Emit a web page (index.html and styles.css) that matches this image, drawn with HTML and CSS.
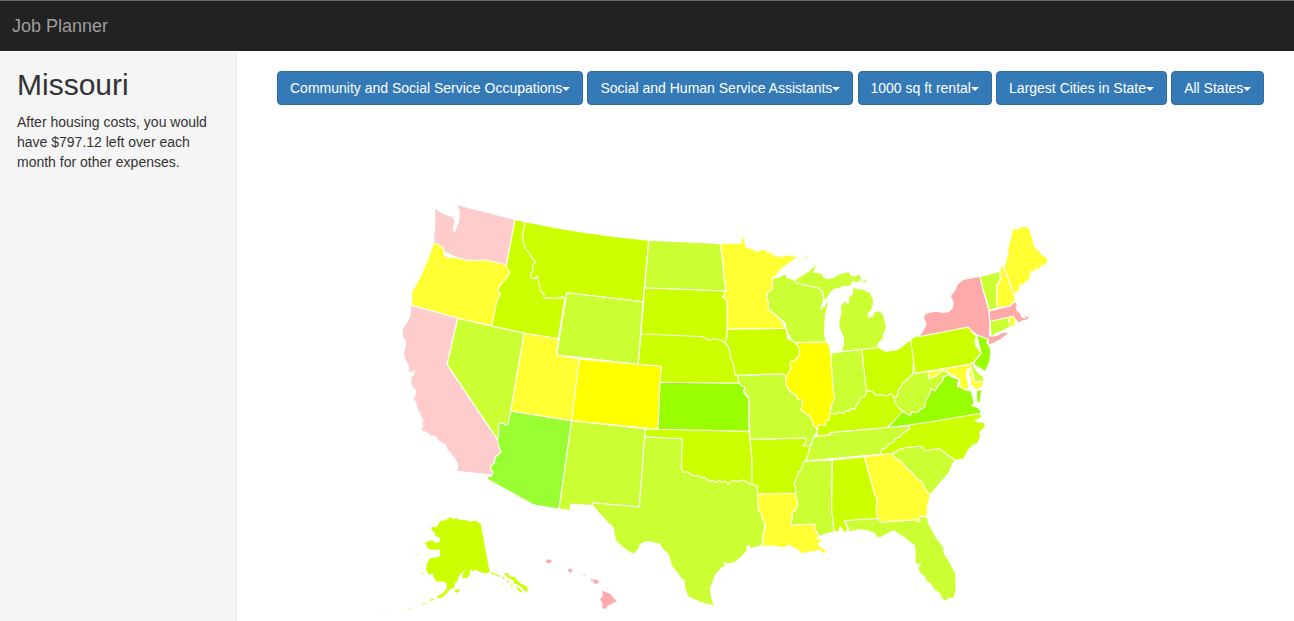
FILE: index.html
```html
<!DOCTYPE html>
<html lang="en">
<head>
<meta charset="utf-8">
<title>Job Planner</title>
<link rel="stylesheet" href="styles.css">
</head>
<body>
<header class="navbar"><a class="brand">Job Planner</a></header>
<div class="layout">
<aside class="sidebar">
<h1>Missouri</h1>
<p>After housing costs, you would have $797.12 left over each month for other expenses.</p>
</aside>
<main class="main">
<div class="filters">
<button class="btn">Community and Social Service Occupations<span class="caret"></span></button>
<button class="btn">Social and Human Service Assistants<span class="caret"></span></button>
<button class="btn">1000 sq ft rental<span class="caret"></span></button>
<button class="btn">Largest Cities in State<span class="caret"></span></button>
<button class="btn">All States<span class="caret"></span></button>
</div>
<svg class="map" viewBox="277 105 1017 516" width="1017" height="516">
<!-- West -->
<path class="rose-light" d="M434.7 207.5L438 210.3 443.3 213.3 448 215.3 453.2 216.6 455 221 454 225 453.7 231 455 231 456.5 225.5 458.5 222.5 459 216 459.2 210 457 208 457.5 204.7 515 219.5 506.3 265 480 268 440 250 433 243 434.5 240 433.5 236 434.8 225Z"/>
<path class="lime" d="M515 219.5L527 222.1 545 260 570 292 564.7 300 558.3 338.7 524.3 333.3 491.7 326 485 290 506.3 265Z"/>
<path class="yellow-light" d="M433.2 243.3L438.3 243.8 439.5 246 442.7 246.7 444.3 250 444 255 448.3 257.7 453.3 257 457 257.2 459 259 462 258.6 468 261 471 259.5 475 261 480 259.7 488 260.3 506.3 265 507 268 510 272 507 277 503.3 282.3 500 285 497.2 290 498.5 291.5 500.3 293 498.5 298 496.7 301.7 491.7 326 457.7 318.3 410.5 305 411.8 300 411.8 291.4 419.5 278 426.2 263 431.2 250Z"/>
<path class="rose-light" d="M410.5 305L457.7 318.3 447 364.3 497.3 439.3 503 452 498 477 492.3 475 457.3 471.2 457.3 463 454.5 458.3 450.5 453.3 446.8 449.5 446 445.3 442.5 443.4 437.5 440.4 435.5 436.4 430.5 435.9 426.5 432.4 421.6 431 421.2 429 422.8 426 421.5 424 422.8 420 420.5 417 420.5 415 417.8 410 415.5 403 413.2 398.3 416 393 415.8 391 413.5 388 411.5 387 410.8 383 411.1 376.2 413.5 375.5 414.2 370.3 411.8 372.7 408.8 371.8 408 365 404.1 358 403.5 353.3 405.2 346 405.2 341 402.5 337 402.1 328.1 405.5 324.2 407.8 320 410 315Z"/>
<path class="lime-light" d="M457.7 318.3L524.3 333.3 510.7 411 508 426 499 438 497.3 439.3 447 364.3Z"/>
<path class="green-light" d="M510.7 411L571.7 420.7 559 509.2 533.3 504.8 487 478.9 488.3 476.3 492 475.5 492.8 471.5 490.7 470 491.3 465 494.3 463 495.3 456.7 501.3 452.3 499.3 449 498 443 497.3 439.3 498.5 436 498.7 423.3 503 422.8 505 425 508 424.3Z"/>
<path class="yellow-light" d="M524.3 333.3L558.3 338.7 556.7 355 579.3 359 571.7 420.7 510.7 411Z"/>
<path class="lime" d="M525 221.8Q585 234.5 648.7 240.2L643 301.7 566.7 292.7 564.7 300 562.5 296.3 560 298.5 557 297.5 553 298.7 549 297.6 544.3 298.3 543.7 293.3 540.7 291.5 540 287 538 281 537.3 276 534 279 531 277.8 530.5 274 533 270.5 532.3 266 535.7 261.7 533 260 530 254 525 248 523.3 241 522.5 236.7Z"/>
<path class="lime-light" d="M566.7 292.7L643 301.7 638.3 364.3 556.7 355Z"/>
<path class="yellow" d="M579.3 359L638.3 364.3 661.3 366.3 658 429.3 571.7 420.7Z"/>
<path class="lime-light" d="M571.7 420.7L645.3 428.7 639.3 507 592.3 502.7 592.3 505.5 571 504.2 570.4 510.5 559 509.2Z"/>
<!-- Plains and South -->
<path class="lime-light" d="M644.7 436.7L690 439 720 460 757.3 480 765 525 761.7 545.5 750 549 749.5 545.5 746.5 546.3 747.5 550.5 741.3 557 735.2 562.2 728 564 724 562.3 725.5 566 721.3 568 715.5 575 713 582.2 710.5 587 711.2 595 714.1 605.8 707 604 700 602.2 687.8 596.4 685 589 683.8 580.2 679.6 577.3 677 572.3 672.2 567 670 560.3 667.8 553.6 662.5 548.9 659.1 543.8 646.7 541.5 640.4 544.4 637.8 550.3 634 554.3 627.8 551 621.4 546.4 616 541.3 614.5 536.2 614 531.2 612.2 526.3 608.2 523.4 603 517.6 598.6 512.3 592 505.3 592.7 502.7 639.3 507Z"/>
<path class="lime" d="M645.3 428.7L749 431.3 752 456.7 752.3 485 747.5 482.5 743.3 480 737 481.2 733 480.8 728.3 483.3 725 481.2 721 482.5 719.5 479.7 716.7 483 713 480.3 711 481.2 706.7 479.3 704.5 477 701 477.3 697 475.5 691.7 475.5 688.3 471.7 684.3 472.3 681.3 468.3 682.3 438.7 644.7 436.7Z"/>
<path class="yellow-light" d="M757.7 494L800 492 798 524 815.7 524 815.7 530 819.5 536 816.8 538.6 820.3 539 822.3 541.5 818 543.8 819.5 546 824.5 549 826.8 552.5 823.5 553.8 820 551 817 550.2 813 552.6 811.7 551.4 806 552.5 803.3 554.1 799.7 551.9 796.5 549 792 547.4 789.3 545 786 547 783.3 547.9 773.3 546 761.7 546.3 763 540 762.5 536 765 529 765 524 762 518 761.5 513.5 758.3 510Z"/>
<path class="lime" d="M750 439.3L806 438 811 445.7 808 470 800 493.3 757.7 494 757.3 486 752 484.3 752 456.7Z"/>
<path class="lime-light" d="M804 461.3L832.3 460 831.7 510 834.3 532.2 828 533.2 819 536.5 815.7 530 814.7 524 790.7 525 790.5 521 792.5 518 792 513 796 509 797.8 505 797 499 795.7 496 796 489 794 483 796.5 478 798 475 797.7 473 801 470 803 464Z"/>
<path class="lime-light" d="M844.3 520.7L877.7 516 918.3 517 920 516 927.2 517.3 928.5 523 932.2 530 937.4 539.2 943.8 547.1 944 553 949.5 561.8 955.5 573.1 956.3 590 953.8 598 949.3 598.5 945 601.1 942.1 599.5 939.6 593.5 934.6 590.5 931 584.4 925.3 580 924.6 576.5 921 574.5 917.6 568 920.5 563.5 917.5 565.3 915 562.3 915.1 552 914.5 545.3 909.6 542.4 904.7 537.8 898.3 534.1 893.3 530.7 887.2 534.1 880 538 876.1 537 874.6 533.5 866.5 530.5 859 529.9 846.9 532.6 849 529Z"/>
<path class="lime" d="M832.3 460L864.3 456.7 876.7 498.3 880 518.3 862 519.4 844.3 520.7 847 526 847.3 531.5 843.3 532.2 841.2 527.5 840 527.2 838.8 531.2 834.3 532.2 831.7 510Z"/>
<path class="yellow-light" d="M864.3 456.7L900 452 935 490 930.5 494.3 929 500 927.2 508.3 927.2 517.3 920 516 919.5 522 917.6 522 917 519.6 880.7 522.3 878 518.3 876.3 513 876.5 502 877.3 498.5 874.7 495 872 485Z"/>
<path class="lime" d="M878 455L878 440 905 424 980.5 413.3 981.7 417.5 975 421 978 422 983.8 422.2 985.6 426.7 979.6 432.2 980.6 436 978 443 971.9 446 967.5 451.3 964 458.8 954.3 460.5 925 460 893.3 453.3Z"/>
<path class="lime-light" d="M893.3 453.3L898 450 905 447.7 921.7 446 923.5 449 925.7 450.7 939 448.7 954.8 460 951.5 466.2 948.8 473.6 942.5 480 937.5 486.3 930 494.8 925 488.5 921.7 481.7 916 478 913 473.5 906.7 468.3 901 461.5 893.3 456.7Z"/>
<path class="lime" d="M817 436L817 422 840 400 865 385 895 390 908 413 890 427.3 830 432.7 830 435Z"/>
<path class="green" d="M887 428L894 421 903 411 925 380 943 371 951.7 376.7 955 378 959 379.5 957.3 386.7 961 386.8 965 389.5 971.5 391.2 972 395 973.5 399 974 404.5 971.5 405.2 976 407 979.5 408.5 981 413.2 930 422Z"/>
<path class="green" d="M976.4 391.2L982.4 388.3 981.2 393 980 403 976.8 402Z"/>
<path class="lime-light" d="M817.3 436.3L830 435 830 432.7 890 427.3 910 426 909 429.5 903 433 900 437 896 438.5 893 442.5 889 444 885.5 448 881.7 449.5 880.7 454.3 805.7 461 808 455 809 450 811 445 813.3 437.3Z"/>
<path class="lime" d="M861.7 349.3L878.3 346.8 882 349.5 886.7 351.5 890 350.5 896.9 350 902.3 346 910.7 339.3 920 370 900 400 894.3 398.3 892.5 394.7 890 393.3 887.5 396.3 882 394.8 876 395 871.7 391 869 391.3 867 390 866 391.7Z"/>
<path class="lime-light" d="M830.7 353.3L861.7 349.3 866 388 866.5 393 864.5 396.5 860 397.5 859 402 856.5 404.5 855 409.5 851.5 408.5 849 411 846 410.8 843.5 413.5 839 412 835 414.2 830 413.3 828 400Z"/>
<path class="yellow" d="M785 343L826 341.7 829 344 830.7 353.3 833.3 391.7 834.5 399 831.5 405 830 412.7 829.3 420 826 420.5 825 425.5 821 425.3 818.3 425.2 817 429 810 428 780 390Z"/>
<path class="lime-light" d="M735 375.3L782.7 373.7 786 376.7 785.7 384 788 389 793 393.5 796 395.5 798.3 399.7 802.7 400 802.3 404 801 410 805 413 810 416.5 811.7 420 813.3 425 816.5 428 817.3 432 813.5 437.3 812 443 810 445.7 802.7 446 806.5 441 805 438 750 439.3 748.7 398.3 740 385Z"/>
<path class="lime" d="M641 333.7L703.3 333 728 340 737 375 739.3 383.3 660 382.3 661.3 366.3 638.3 364.3Z"/>
<path class="green" d="M660 382.3L739.3 383.3 742 386 745 387.3 743.3 391.7 745.5 395 748.7 398.3 749 431.3 658 429.3Z"/>
<path class="lime" d="M644.7 287.7L726.3 291 725 295 722.7 296.7 727.3 301 727.3 329.3 726.5 340 726 344 723.5 341.5 719.3 339.7 713 339 710 340.3 706 338.8 703.3 336.7 641 333.7Z"/>
<path class="lime-light" d="M648.7 240.2L720 243.5 723 262 724 276.7 726.3 291 644.7 287.7Z"/>
<!-- Great Lakes -->
<path class="yellow-light" d="M720 243.2L741 243.2 741 237.5 744 238 746 246.8 749.5 248 755 250.1 757 251.4 760 250 765.2 249.4 767.3 252 771.3 252.5 775.2 256.4 778 255 782 256.9 785 254.9 791 255.4 799.5 257.4 793.4 260 785.4 266.2 780.4 270 775.4 276.5 772.3 278.8 780 319 786 328.3 727.3 329.3 727.3 301 722.7 296.7 726.3 291 724 276.7 723 262Z"/>
<path class="lime-light" d="M772.3 278.3L779 277 785.7 273.3 787 277.5 794.3 280 822 287 823.8 299 821 309 824.5 305.5 829 297.8 827.6 306 825.5 315 824.8 326.7 824.5 334 826.5 341.7 792 342.7 786 328 785.5 323.5 782.5 320.5 780 319 774 313.5 768 309.5 768.5 303 766.3 297 768 292.5 772.3 289Z"/>
<path class="lime" d="M727.3 329.3L786 328.3 787 333 788 339 792 340.5 795 342.7 799.7 348.3 798.7 356 794.5 360.5 790.5 361.5 789.7 365 791.3 368 789 372.5 786 376.7 782.7 373.7 735.3 375.3 733.5 364 730.5 358 730 352 728 346.5 725.5 343 726.7 338Z"/>
<path class="lime-light" d="M794.3 280L802 275.2 810 270 812 267.5 817.8 263.7 815 269 814 272.5 817 272.2 822 273.8 824.2 277.4 829 278.4 833 277.4 839 273.9 849 271.4 851 275.2 855 276 860.2 274 861.7 281 857 282.6 852.5 281.5 850.5 286.5 843 286.2 840.2 288.2 834.3 289.2 830.5 292.4 827.4 298.5 824.3 300.7 822.7 292.3 819 288.5 815 287.3 806 285.3 796.7 283.3Z"/>
<path class="lime-light plain" d="M803.5 258.8L809.8 253.7 805 258.5ZM862.5 280.7L866 280.2 867.3 281.7 863 282Z"/>
<path class="lime-light" d="M853.4 286.7L858 289 862 288.7 870.4 292.8 873.3 299 873.3 305 871 311 868.3 313.7 868.5 317 872 316.8 873.6 312.1 880.2 310.4 883.6 315 885.6 323.3 886.6 328 883.6 334 883 339.2 879.4 342.4 876.9 348 841 351.5 843.3 345 843.5 338 839 327 838.8 321 841 313 840.5 306 846.2 299.2 846.8 303.5 848.5 302.5 849 296.2 852 294Z"/>
<!-- Mid-Atlantic and Northeast -->
<path class="lime-light" d="M913.3 358L915 373.3 928.3 371.7 940 368 951 374 944 376.5 942 382 938.3 385 935 391 931 389 929 396 926 400 925 407 920 409.7 918 412.5 912 412 910 415.5 903.5 412 899 408 894.5 402 894.5 397 897.5 396 898 390 900.5 388.5 902.7 383 907 379.5 912.5 374.5 913.5 364Z"/>
<path class="yellow-light" d="M928.3 371.7L970 364.3 975 381.7 984.3 381.5 982 387 976.3 390 973.2 387.3 971 383.8 970.2 377 968.7 371.4 969.5 368.5 967 370 966.5 377 968 382 969 388.4 965 390 959 386 960 380 955 376.5 950 374 945.5 370.8 940 371.7 936 376 931.5 378 929 379Z"/>
<path class="lime-light" d="M970 364.3L974 362.5 973.5 366 978 372.5 983 376.2 984.5 381 975 382Z"/>
<path class="green" d="M976.7 334.7L987.9 338 987 343 989.5 345 990.8 352 989.8 361.9 985.2 371.6 981 369 974 364.7 974.5 361.5 981 353.3Z"/>
<path class="lime" d="M910.7 339.3L918.3 335 968.3 326.7 971.5 329.5 973 333 976.7 335.5 975 341 976 346 979 350 981 353.3 977.5 357 974.3 361.7 970 364.3 915 373.3Z"/>
<path class="rose" d="M918.5 336.7L922 332.2 926 324.5 923.2 317 925.5 313.5 935 311.2 943 312.4 948.7 311.4 952.4 308.1 953.4 303 950.3 296.2 954.5 290.2 957.5 284.2 963 279.5 980 276.2 983.3 290 989 311.7 990 323.3 989.3 336 997 335.5 1000.7 333 1007.5 331.8 1008 334 1001.2 339.5 995.2 342.6 988.5 345.6 988.2 339 977.5 335.3 972 331.5 968.3 327Z"/>
<path class="lime-light" d="M980 276.4L1000 271.2 1000.5 280 996.7 285 997.7 307.7 989 310.5 986.5 300 983.3 291Z"/>
<path class="yellow-light" d="M1000 270.8L1001 266 1004 266.2 1015 297.7 1015.5 301 1011.7 305.5 997.7 308 996.5 303 997.3 292 996.5 286 1000.5 281Z"/>
<path class="yellow-light" d="M1004 266.7L1006 262 1005.2 258.8 1007.8 256.8 1008 247 1010.5 238 1012.9 227.9 1018 228.9 1022 226.4 1026.2 225.9 1029.8 229.3 1033 240 1035.4 248.6 1038.8 249.3 1041.5 254.5 1044.4 255.5 1048.7 261.1 1044.3 266 1041 266 1040 269.6 1036.2 269.1 1034.2 272.7 1031.4 270.7 1030 277.2 1028.4 282.6 1025.3 281.6 1023.8 285.6 1020.4 284.4 1019 290.3 1016 293 1015.3 298.5Z"/>
<path class="rose" d="M989 311L1010 306 1014.7 301.5 1017 304 1016.7 309.8 1020.4 313.1 1021.9 317 1025 317.7 1024.8 315.7 1030.5 316.8 1026.7 320 1021.2 321.3 1019 323.6 1013.3 316.8 990 322Z"/>
<path class="lime-light" d="M989.8 321.5L1008.3 317.2 1010.2 327 1001.2 331.5 996.2 333.5 992 336.6 990.7 333Z"/>
<path class="yellow-light" d="M1008.3 317.2L1013.3 316 1015.4 320 1014.3 326 1010.3 327.8Z"/>
<!-- Alaska: drawn on a grid three times finer than the map -->
<g class="inset" transform="translate(370 505) scale(.33333)">
<path class="lime" d="M332 57L359 202 350 205 338 203 328 200 318 193 312 198 301 194 300 208 292 219 279 220 277 208 288 192 278 200 268 211 262 228 253 238 254 247 240 253 231 265 215 278 199 279 206 271 219 265 230 252 230 234 215 229 200 230 191 217 189 205 177 209 168 193 170 179 180 160 201 157 211 154 209 133 184 135 172 129 170 121 164 114 187 104 195 113 210 111 209 97 196 94 194 82 185 76 184 66 199 67 211 48 227 45 238 40 242 34 246 42 264 41 272 46 286 45 303 50 317 47Z"/>
<path class="lime" d="M360 203L371 202 373 208 388 211 390 216 375 211ZM402 204L412 204 421 215 434 215 444 229 453 236 470 244 474 260 464 257 450 243 437 237 430 226 415 219ZM408 227L418 229 413 234ZM421 236L429 242 425 246ZM437 245L448 250 460 264 448 260ZM403 217L393 215 402 222ZM429 225L437 233 433 237ZM253 256L269 251 267 260 258 264ZM155 297L166 291 165 296ZM178 287L186 281 193 283 183 288ZM152 204L161 203 158 208Z"/>
<path class="trace chain" d="M129 141l7 1M138 147l8 3M115 312l8-2M128 308l5-1"/>
<path class="trace" d="M16 309h4M26 312h8M50 316h6M72 315h5M92 313h10M113 244h4"/>
<!-- Hawaii -->
<path class="rose" d="M527 168L535 163 545 165 543 173 535 175 527 171ZM594 193L604 190 607 199 601 203 595 199ZM636 210L646 211 644 213ZM663 220L668 224 680 224 687 230 684 236 674 236 670 229 663 226ZM696 257L723 267 728 277 740 288 725 296 713 302 706 312 697 309 697 294 690 283 700 271Z"/>
</g>
</svg>
</main>
</div>
</body>
</html>
```
FILE: styles.css
```css
* { box-sizing: border-box; }
body {
  margin: 0;
  height: 621px;
  overflow: hidden;
  display: flex;
  flex-direction: column;
  background: #fff;
  color: #333;
  font: 14px/20px "Liberation Sans", Arial, sans-serif;
}
.navbar {
  height: 51px;
  flex: none;
  display: flex;
  align-items: center;
  padding-left: 12px;
  background: #222;
  border-top: 1px solid #696969;
}
.brand { font-size: 18px; color: #9d9d9d; }
.layout { flex: 1; display: flex; min-height: 0; }
.sidebar {
  width: 237px;
  flex: none;
  margin-top: 1px;
  padding: 16px 17px;
  background: #f5f5f5;
  border-right: 1px solid #eee;
}
.sidebar h1 {
  margin: 0 0 11px;
  font-size: 30px;
  line-height: 33px;
  font-weight: 500;
}
.sidebar p { margin: 0; }
.main { flex: 1; min-width: 0; padding: 20px 0 0 40px; }
.filters { display: flex; gap: 4.15px; }
.btn {
  height: 34px;
  padding: 6px 12px;
  display: flex;
  align-items: center;
  white-space: nowrap;
  font: inherit;
  color: #fff;
  background: #337ab7;
  border: 1px solid #2e6da4;
  border-radius: 4px;
}
.caret {
  border-top: 4px solid #fff;
  border-left: 4px solid transparent;
  border-right: 4px solid transparent;
  margin-top: 1px;
}
.map { display: block; }
.map path { stroke: #fff; stroke-width: 1.1; stroke-linejoin: round; }
.map .plain, .map .inset path { stroke: none; }
.map .inset .trace { stroke: #edf5d5; stroke-width: 2; fill: none; }
.map .inset .chain { stroke: #d9f56a; }
.rose { fill: #faa; }
.rose-light { fill: #fcc; }
.lime { fill: #cf0; }
.lime-light { fill: #cf3; }
.yellow { fill: #ff0; }
.yellow-light { fill: #ff3; }
.green { fill: #9f0; }
.green-light { fill: #9f3; }
```
